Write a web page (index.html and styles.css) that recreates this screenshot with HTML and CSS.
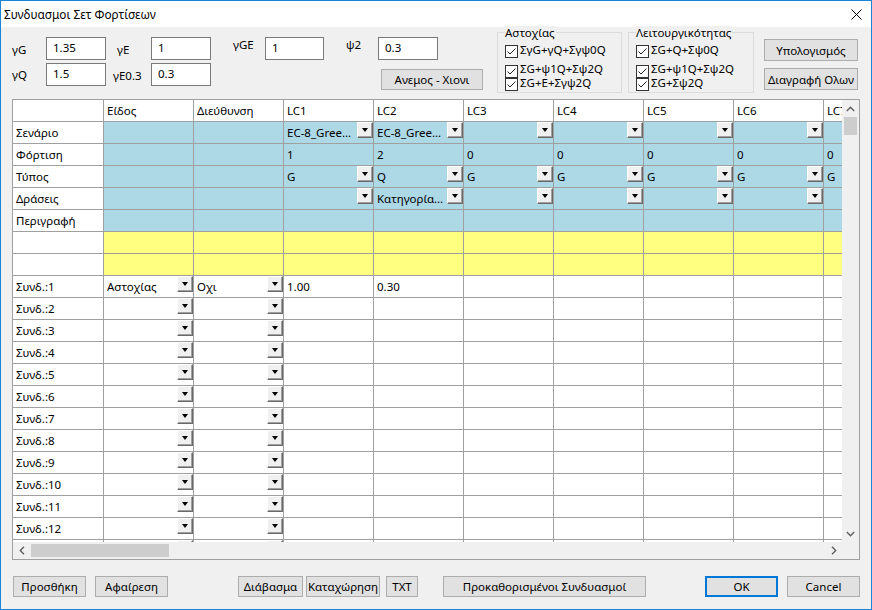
FILE: index.html
```html
<!DOCTYPE html>
<html lang="el">
<head>
<meta charset="utf-8">
<title>Συνδυασμοι Σετ Φορτίσεων</title>
<link rel="stylesheet" href="styles.css">
</head>
<body>
<div class="window">
  <div class="titlebar">
    <span class="title">Συνδυασμοι Σετ Φορτίσεων</span>
    <svg class="close" width="11" height="11" viewBox="0 0 11 11"><path d="M0.5 0.5L10.5 10.5M10.5 0.5L0.5 10.5" stroke="#000" stroke-width="1"/></svg>
  </div>

  <div class="top">
    <div class="fields f1">
      <div class="frow"><span class="lbl low">γG</span><input class="edit" value="1.35"></div>
      <div class="frow"><span class="lbl">γQ</span><input class="edit" value="1.5"></div>
    </div>
    <div class="fields f2">
      <div class="frow"><span class="lbl low ind">γE</span><input class="edit" value="1"></div>
      <div class="frow"><span class="lbl low">γE0.3</span><input class="edit" value="0.3"></div>
    </div>
    <div class="fields f3">
      <div class="frow"><span class="lbl hi">γGE</span><input class="edit w59" value="1"></div>
    </div>
    <div class="fields f4">
      <div class="frow"><span class="lbl hi">ψ2</span><input class="edit" value="0.3"></div>
      <button class="btn wind">Ανεμος - Χιονι</button>
    </div>
    <div class="group g1">
      <span class="gtitle">Αστοχίας</span>
      <div class="chk r1"><svg width="13" height="13" viewBox="0 0 13 13"><rect x="0.5" y="0.5" width="12" height="12" fill="#fff" stroke="#333"/><path d="M2.5 6.5L5 9L10.5 3.5" fill="none" stroke="#222" stroke-width="1"/></svg><span>ΣγG+γQ+Σγψ0Q</span></div>
      <div class="chk r2"><svg width="13" height="13" viewBox="0 0 13 13"><rect x="0.5" y="0.5" width="12" height="12" fill="#fff" stroke="#333"/><path d="M2.5 6.5L5 9L10.5 3.5" fill="none" stroke="#222" stroke-width="1"/></svg><span>ΣG+ψ1Q+Σψ2Q</span></div>
      <div class="chk r3"><svg width="13" height="13" viewBox="0 0 13 13"><rect x="0.5" y="0.5" width="12" height="12" fill="#fff" stroke="#333"/><path d="M2.5 6.5L5 9L10.5 3.5" fill="none" stroke="#222" stroke-width="1"/></svg><span>ΣG+E+Σγψ2Q</span></div>
    </div>
    <div class="group g2">
      <span class="gtitle">Λειτουργικότητας</span>
      <div class="chk r1"><svg width="13" height="13" viewBox="0 0 13 13"><rect x="0.5" y="0.5" width="12" height="12" fill="#fff" stroke="#333"/><path d="M2.5 6.5L5 9L10.5 3.5" fill="none" stroke="#222" stroke-width="1"/></svg><span>ΣG+Q+Σψ0Q</span></div>
      <div class="chk r2"><svg width="13" height="13" viewBox="0 0 13 13"><rect x="0.5" y="0.5" width="12" height="12" fill="#fff" stroke="#333"/><path d="M2.5 6.5L5 9L10.5 3.5" fill="none" stroke="#222" stroke-width="1"/></svg><span>ΣG+ψ1Q+Σψ2Q</span></div>
      <div class="chk r3"><svg width="13" height="13" viewBox="0 0 13 13"><rect x="0.5" y="0.5" width="12" height="12" fill="#fff" stroke="#333"/><path d="M2.5 6.5L5 9L10.5 3.5" fill="none" stroke="#222" stroke-width="1"/></svg><span>ΣG+Σψ2Q</span></div>
    </div>
    <div class="cmds">
      <button class="btn calc">Υπολογισμός</button>
      <button class="btn clear">Διαγραφή Ολων</button>
    </div>
  </div>

  <div class="grid">
    <div class="gbody">
      <div class="viewport">
        <div class="row">
          <div class="c rh"></div><div class="c"><span class="t">Είδος</span></div><div class="c"><span class="t">Διεύθυνση</span></div><div class="c"><span class="t">LC1</span></div><div class="c"><span class="t">LC2</span></div><div class="c"><span class="t">LC3</span></div><div class="c"><span class="t">LC4</span></div><div class="c"><span class="t">LC5</span></div><div class="c"><span class="t">LC6</span></div><div class="c"><span class="t">LC7</span></div>
        </div>
        <div class="row">
          <div class="c rh">Σενάριο</div><div class="c b"></div><div class="c b"></div><div class="c b"><span class="t">EC-8_Gree...</span><span class="dd"></span></div><div class="c b"><span class="t">EC-8_Gree...</span><span class="dd"></span></div><div class="c b"><span class="dd"></span></div><div class="c b"><span class="dd"></span></div><div class="c b"><span class="dd"></span></div><div class="c b"><span class="dd"></span></div><div class="c b"><span class="dd"></span></div>
        </div>
        <div class="row">
          <div class="c rh">Φόρτιση</div><div class="c b"></div><div class="c b"></div><div class="c b"><span class="t">1</span></div><div class="c b"><span class="t">2</span></div><div class="c b"><span class="t">0</span></div><div class="c b"><span class="t">0</span></div><div class="c b"><span class="t">0</span></div><div class="c b"><span class="t">0</span></div><div class="c b"><span class="t">0</span></div>
        </div>
        <div class="row">
          <div class="c rh">Τύπος</div><div class="c b"></div><div class="c b"></div><div class="c b"><span class="t">G</span><span class="dd"></span></div><div class="c b"><span class="t">Q</span><span class="dd"></span></div><div class="c b"><span class="t">G</span><span class="dd"></span></div><div class="c b"><span class="t">G</span><span class="dd"></span></div><div class="c b"><span class="t">G</span><span class="dd"></span></div><div class="c b"><span class="t">G</span><span class="dd"></span></div><div class="c b"><span class="t">G</span><span class="dd"></span></div>
        </div>
        <div class="row">
          <div class="c rh">Δράσεις</div><div class="c b"></div><div class="c b"></div><div class="c b"><span class="dd"></span></div><div class="c b"><span class="t">Κατηγορία...</span><span class="dd"></span></div><div class="c b"><span class="dd"></span></div><div class="c b"><span class="dd"></span></div><div class="c b"><span class="dd"></span></div><div class="c b"><span class="dd"></span></div><div class="c b"><span class="dd"></span></div>
        </div>
        <div class="row">
          <div class="c rh">Περιγραφή</div><div class="c b"></div><div class="c b"></div><div class="c b"></div><div class="c b"></div><div class="c b"></div><div class="c b"></div><div class="c b"></div><div class="c b"></div><div class="c b"></div>
        </div>
        <div class="row">
          <div class="c rh"></div><div class="c y"></div><div class="c y"></div><div class="c y"></div><div class="c y"></div><div class="c y"></div><div class="c y"></div><div class="c y"></div><div class="c y"></div><div class="c y"></div>
        </div>
        <div class="row">
          <div class="c rh"></div><div class="c y"></div><div class="c y"></div><div class="c y"></div><div class="c y"></div><div class="c y"></div><div class="c y"></div><div class="c y"></div><div class="c y"></div><div class="c y"></div>
        </div>
        <div class="row">
          <div class="c rh">Συνδ.:1</div><div class="c"><span class="t">Αστοχίας</span><span class="dd"></span></div><div class="c"><span class="t">Οχι</span><span class="dd"></span></div><div class="c"><span class="t">1.00</span></div><div class="c"><span class="t">0.30</span></div><div class="c"></div><div class="c"></div><div class="c"></div><div class="c"></div><div class="c"></div>
        </div>
        <div class="row">
          <div class="c rh">Συνδ.:2</div><div class="c"><span class="dd"></span></div><div class="c"><span class="dd"></span></div><div class="c"></div><div class="c"></div><div class="c"></div><div class="c"></div><div class="c"></div><div class="c"></div><div class="c"></div>
        </div>
        <div class="row">
          <div class="c rh">Συνδ.:3</div><div class="c"><span class="dd"></span></div><div class="c"><span class="dd"></span></div><div class="c"></div><div class="c"></div><div class="c"></div><div class="c"></div><div class="c"></div><div class="c"></div><div class="c"></div>
        </div>
        <div class="row">
          <div class="c rh">Συνδ.:4</div><div class="c"><span class="dd"></span></div><div class="c"><span class="dd"></span></div><div class="c"></div><div class="c"></div><div class="c"></div><div class="c"></div><div class="c"></div><div class="c"></div><div class="c"></div>
        </div>
        <div class="row">
          <div class="c rh">Συνδ.:5</div><div class="c"><span class="dd"></span></div><div class="c"><span class="dd"></span></div><div class="c"></div><div class="c"></div><div class="c"></div><div class="c"></div><div class="c"></div><div class="c"></div><div class="c"></div>
        </div>
        <div class="row">
          <div class="c rh">Συνδ.:6</div><div class="c"><span class="dd"></span></div><div class="c"><span class="dd"></span></div><div class="c"></div><div class="c"></div><div class="c"></div><div class="c"></div><div class="c"></div><div class="c"></div><div class="c"></div>
        </div>
        <div class="row">
          <div class="c rh">Συνδ.:7</div><div class="c"><span class="dd"></span></div><div class="c"><span class="dd"></span></div><div class="c"></div><div class="c"></div><div class="c"></div><div class="c"></div><div class="c"></div><div class="c"></div><div class="c"></div>
        </div>
        <div class="row">
          <div class="c rh">Συνδ.:8</div><div class="c"><span class="dd"></span></div><div class="c"><span class="dd"></span></div><div class="c"></div><div class="c"></div><div class="c"></div><div class="c"></div><div class="c"></div><div class="c"></div><div class="c"></div>
        </div>
        <div class="row">
          <div class="c rh">Συνδ.:9</div><div class="c"><span class="dd"></span></div><div class="c"><span class="dd"></span></div><div class="c"></div><div class="c"></div><div class="c"></div><div class="c"></div><div class="c"></div><div class="c"></div><div class="c"></div>
        </div>
        <div class="row">
          <div class="c rh">Συνδ.:10</div><div class="c"><span class="dd"></span></div><div class="c"><span class="dd"></span></div><div class="c"></div><div class="c"></div><div class="c"></div><div class="c"></div><div class="c"></div><div class="c"></div><div class="c"></div>
        </div>
        <div class="row">
          <div class="c rh">Συνδ.:11</div><div class="c"><span class="dd"></span></div><div class="c"><span class="dd"></span></div><div class="c"></div><div class="c"></div><div class="c"></div><div class="c"></div><div class="c"></div><div class="c"></div><div class="c"></div>
        </div>
        <div class="row">
          <div class="c rh">Συνδ.:12</div><div class="c"><span class="dd"></span></div><div class="c"><span class="dd"></span></div><div class="c"></div><div class="c"></div><div class="c"></div><div class="c"></div><div class="c"></div><div class="c"></div><div class="c"></div>
        </div>
        <div class="row">
          <div class="c rh">Συνδ.:13</div><div class="c"><span class="dd"></span></div><div class="c"><span class="dd"></span></div><div class="c"></div><div class="c"></div><div class="c"></div><div class="c"></div><div class="c"></div><div class="c"></div><div class="c"></div>
        </div>
      </div>
      <div class="vscroll">
        <span class="arrow"><svg width="9" height="6" viewBox="0 0 9 6"><path d="M0.8 5L4.5 1.3L8.2 5" fill="none" stroke="#606060" stroke-width="1.4"/></svg></span>
        <span class="vthumb"></span>
        <span class="spacer"></span>
        <span class="arrow"><svg width="9" height="6" viewBox="0 0 9 6"><path d="M0.8 1L4.5 4.7L8.2 1" fill="none" stroke="#606060" stroke-width="1.4"/></svg></span>
      </div>
    </div>
    <div class="hscroll">
      <span class="arrow"><svg width="6" height="9" viewBox="0 0 6 9"><path d="M5 0.8L1.3 4.5L5 8.2" fill="none" stroke="#606060" stroke-width="1.4"/></svg></span>
      <span class="hthumb"></span>
      <span class="spacer"></span>
      <span class="arrow"><svg width="6" height="9" viewBox="0 0 6 9"><path d="M1 0.8L4.7 4.5L1 8.2" fill="none" stroke="#606060" stroke-width="1.4"/></svg></span>
      <span class="corner"></span>
    </div>
  </div>

  <div class="bottom">
    <button class="btn b-add">Προσθήκη</button>
    <button class="btn b-rem">Αφαίρεση</button>
    <button class="btn b-read">Διάβασμα</button>
    <button class="btn b-save">Καταχώρηση</button>
    <button class="btn b-txt">TXT</button>
    <button class="btn b-pre">Προκαθορισμένοι Συνδυασμοί</button>
    <button class="btn b-ok">OK</button>
    <button class="btn b-cancel">Cancel</button>
  </div>
</div>
</body>
</html>
```

FILE: styles.css
```css
* { box-sizing: border-box; }
html, body { margin: 0; padding: 0; }
body {
  font-family: "Noto Sans", "Segoe UI", sans-serif;
  font-size: 11.5px;
  color: #000;
  background: #fff;
}
.window {
  width: 872px;
  height: 610px;
  border: 1px solid #1883d7;
  background: #f0f0f0;
  display: flex;
  flex-direction: column;
}
.titlebar {
  flex: none;
  height: 26px;
  background: #fff;
  display: flex;
  align-items: center;
  justify-content: space-between;
  padding: 0 9px 0 3px;
}
.title { line-height: 16px; font-size: 11.8px; }

/* top parameter area */
.top {
  flex: none;
  height: 72px;
  display: flex;
  align-items: flex-start;
  padding-left: 11px;
}
.fields { display: flex; flex-direction: column; margin-top: 10px; }
.frow { display: flex; align-items: center; height: 23px; }
.frow + .frow { margin-top: 3px; }
.lbl { flex: none; line-height: 14px; }
.lbl.low { padding-top: 3px; }
.lbl.hi { align-self: flex-start; line-height: 16px; }
.lbl.ind { padding-left: 4px; }
.f1 { width: 94px; }
.f1 .lbl { width: 34px; }
.f2 { width: 98px; margin-left: 7px; }
.f2 .lbl { width: 38px; }
.f3 { width: 91px; margin-left: 22px; }
.f3 .lbl { width: 32px; }
.f4 { width: 137px; margin-left: 22px; }
.f4 .lbl { width: 32px; }
.edit {
  flex: none;
  width: 60px;
  height: 23px;
  margin: 0;
  border: 1px solid #7a7a7a;
  background: #fff;
  font: inherit;
  color: #000;
  padding: 0 0 2px 6px;
  outline: none;
}
.edit.w59 { width: 59px; }

.btn {
  flex: none;
  height: 21px;
  margin: 0;
  padding: 0;
  border: 1px solid #adadad;
  background: #e1e1e1;
  font: inherit;
  color: #000;
  display: flex;
  align-items: center;
  justify-content: center;
  white-space: nowrap;
}
.wind { width: 102px; margin: 9px 0 0 35px; }

.group {
  flex: none;
  margin-top: 5px;
  height: 61px;
  border: 1px solid #dcdcdc;
  padding: 0 0 0 7px;
  display: flex;
  flex-direction: column;
  align-items: flex-start;
}
.g1 { width: 125px; margin-left: 14px; }
.g2 { width: 126px; margin-left: 6px; }
.gtitle {
  margin-top: -7px;
  line-height: 13px;
  padding-right: 1px;
  background: #f0f0f0;
}
.chk {
  display: flex;
  align-items: center;
  height: 13px;
  line-height: 12px;
  white-space: nowrap;
}
.chk svg { flex: none; margin-right: 2px; }
.chk span { margin-bottom: 4px; }
.chk.r2 span { margin-bottom: 6px; }
.chk.r1 { margin-top: 6px; }
.chk.r2 { margin-top: 7px; }
.chk.r3 { margin-top: 0; }

.cmds { flex: none; width: 94px; margin-left: 10px; display: flex; flex-direction: column; }
.calc { height: 22px; margin-top: 12px; }
.clear { height: 22px; margin-top: 7px; }

/* grid */
.grid {
  flex: none;
  margin-left: 11px;
  width: 848px;
  height: 461px;
  border: 1px solid #a0a0a0;
  background: #fff;
  display: flex;
  flex-direction: column;
}
.gbody { display: flex; height: 442px; }
.viewport { width: 829px; height: 442px; overflow: hidden; }
.row { display: flex; height: 22px; }
.c {
  flex: none;
  width: 90px;
  height: 22px;
  border-right: 1px solid #a0a0a0;
  border-bottom: 1px solid #a0a0a0;
  background: #fff;
  display: flex;
  align-items: flex-start;
  padding-left: 3px;
  line-height: 21px;
  white-space: nowrap;
  overflow: hidden;
}
.c.rh { width: 91px; }
.c.b { background: #add8e6; }
.c.y { background: #ffff80; }
.t { flex: 1; overflow: hidden; }
.dd {
  flex: none;
  width: 16px;
  height: 16px;
  margin-left: auto;
  background: #f0f0f0;
  border: 1px solid;
  border-color: #fff #696969 #696969 #fff;
  box-shadow: inset -1px -1px 0 #a0a0a0;
  display: flex;
  align-items: center;
  justify-content: center;
}
.dd::after {
  content: "";
  border-left: 3px solid transparent;
  border-right: 3px solid transparent;
  border-top: 4px solid #000;
}

.vscroll {
  width: 17px;
  height: 442px;
  background: #f0f0f0;
  display: flex;
  flex-direction: column;
  align-items: center;
}
.arrow {
  flex: none;
  width: 17px;
  height: 17px;
  display: flex;
  align-items: center;
  justify-content: center;
}
.spacer { flex: 1; }
.vthumb { flex: none; width: 13px; height: 18px; background: #cdcdcd; }
.hscroll {
  height: 17px;
  background: #f0f0f0;
  display: flex;
  align-items: center;
}
.hthumb { flex: none; width: 138px; height: 13px; margin-left: 1px; background: #cdcdcd; }
.corner { flex: none; width: 17px; height: 17px; }

/* bottom buttons */
.bottom { flex: none; display: flex; margin-top: 16px; padding-left: 12px; }
.b-add { width: 73px; }
.b-rem { width: 73px; margin-left: 9px; }
.b-read { width: 65px; margin-left: 70px; }
.b-save { width: 74px; margin-left: 3px; }
.b-txt { width: 32px; margin-left: 6px; }
.b-pre { width: 203px; margin-left: 25px; }
.b-ok { width: 73px; margin-left: 59px; border-color: #0078d7; box-shadow: inset 0 0 0 1px #0078d7; }
.b-cancel { width: 73px; margin-left: 9px; }
```
